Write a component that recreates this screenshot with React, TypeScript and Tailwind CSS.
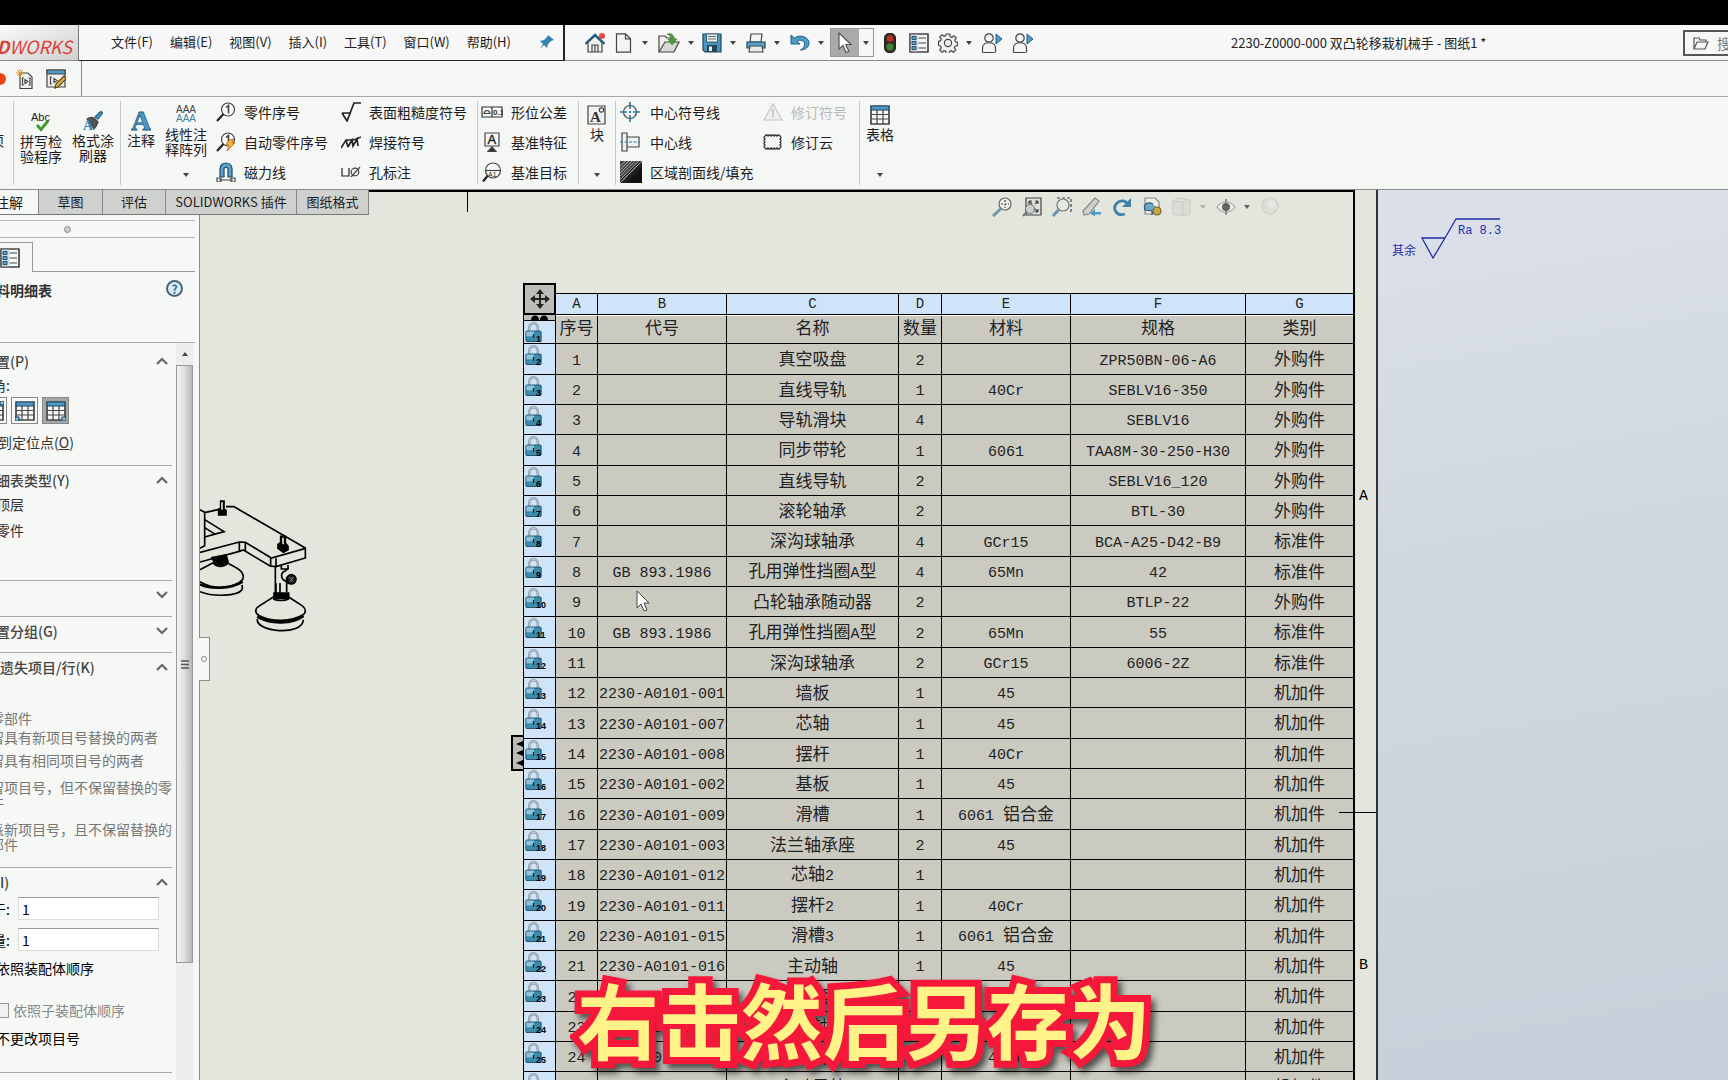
import type { ReactNode } from "react";
import clsx from "clsx";

type IconProps = { children: ReactNode; size?: string; box?: string };

function Icon({ children, size = "size-5", box = "0 0 20 20" }: IconProps) {
  return (
    <svg viewBox={box} className={clsx(size, "shrink-0")} fill="none" stroke="#444" strokeWidth="1.2">
      {children}
    </svg>
  );
}

const Caret = ({ className = "" }: { className?: string }) => (
  <svg viewBox="0 0 6 4" className={clsx("h-1 w-1.5 shrink-0", className)}>
    <path d="M0 0h6L3 4z" fill="#444" />
  </svg>
);

/* ---------- quick access icons ---------- */

const HomeIcon = () => (
  <Icon>
    <path d="M3 9v10h14V9l-7-6z" fill="#f1f1ee" />
    <path d="M7 19v-7h6v7M10 12v7" />
    <path d="M0.5 11 10 2l9.500 9" stroke="#1f5f86" strokeWidth="2.4" />
    <circle cx="17" cy="3" r="3" fill="#e64a3c" stroke="none" />
  </Icon>
);
const NewIcon = () => (
  <Icon>
    <path d="M2.500.8h9l5 5v13.400h-14z" fill="#f4f4f2" />
    <path d="M11.500.8v5h5" />
  </Icon>
);
const OpenIcon = () => (
  <Icon size="h-5 w-[22px]" box="0 0 22 20">
    <path d="M1 19V3h6l2 2h7v4" fill="#efefe9" />
    <path d="M1 19 7 9h14l-5 10z" fill="#d8d9d2" />
    <path d="M9 1c5-1 7 1 7 5h3l-5 6-4-6h3c0-2-1-4-4-5z" fill="#4f9a34" stroke="#3a7a22" strokeWidth=".6" />
  </Icon>
);
const SaveIcon = () => (
  <Icon>
    <path d="M1 1h18v18H3l-2-2z" fill="#4b93b9" stroke="#1d4763" />
    <path d="M4.500 1h11v8h-11z" fill="#eee" stroke="#1d4763" strokeWidth=".8" />
    <path d="M6 3.500h8M6 6h8" strokeWidth=".8" />
    <path d="M5 12h10v7H5z" fill="#2b4558" stroke="none" />
    <path d="M7 13.500h3V18H7z" fill="#e8eef0" stroke="none" />
  </Icon>
);
const PrintIcon = () => (
  <Icon>
    <path d="M5 1h11l-1 8H4z" fill="#f4f4f2" />
    <path d="M1 9h18v6H1z" fill="#5ba3c9" stroke="#1d4763" />
    <path d="M4 13h12l1 6H3z" fill="#e9ecec" />
  </Icon>
);
const UndoIcon = () => (
  <Icon>
    <path d="M1 2v9h9L7 8c4-2 8 0 7.500 4-.2 2-2 4-4 5 5 0 8.500-3 8.500-7C19 4 10 1 4.500 5z" fill="#4f9bc4" stroke="#1f5f86" strokeWidth="1" />
  </Icon>
);
const ArrowIcon = () => (
  <Icon size="h-[22px] w-4" box="0 0 16 22">
    <path d="M2 1v16l4-3.500 3 7 2.800-1.200-3-6.800H14z" fill="#fff" stroke="#555" />
  </Icon>
);
const TrafficIcon = () => (
  <Icon size="h-5 w-3" box="0 0 12 20">
    <rect x=".5" y=".5" width="11" height="19" rx="5" fill="#3c2c28" stroke="#222" />
    <circle cx="6" cy="5.500" r="3.200" fill="#b8322a" stroke="none" />
    <circle cx="6" cy="14" r="3.400" fill="#3c8a36" stroke="none" />
  </Icon>
);
const ListIcon = () => (
  <Icon>
    <path d="M1 1h18v18H1z" fill="#f4f6f6" />
    <path d="M1 1h8v18H1z" fill="#c7dbe6" stroke="none" />
    <path d="M3 3.500h4v3H3zM3 8.500h4v3H3zM3 13.500h4v3H3z" fill="#5ba3c9" stroke="#1d4763" strokeWidth=".9" />
    <path d="M9.500 5H17M9.500 10H17M9.500 15H17M1 1h18v18H1z" />
  </Icon>
);
const GearIcon = () => (
  <Icon>
    <path
      d="M8.300 1h3.400l.5 2.500 1.600.7 2.100-1.500 2.400 2.400-1.500 2.100.7 1.600 2 .5v3.400l-2.500.5-.7 1.600 1.500 2.100-2.400 2.400-2.100-1.500-1.600.7-.5 2.500H8.300l-.5-2.500-1.600-.7-2.100 1.500-2.400-2.400 1.500-2.100-.7-1.600L.5 12.200V8.300l2-.5.7-1.600-1.500-2.100L4.100 1.700l2.100 1.500 1.600-.7z"
      fill="#f1f1ee"
    />
    <circle cx="10" cy="10" r="3.600" />
  </Icon>
);
const PersonIcon = () => (
  <Icon size="h-5 w-[22px]" box="0 0 22 20">
    <circle cx="8" cy="5" r="4.200" fill="#f4f4f2" />
    <path d="M1.500 19v-4c0-7 13-7 13 0v4c0 .8-13 .8-13 0z" fill="#f4f4f2" />
    <path d="M15 1v10l6-5z" fill="#4f9bc4" stroke="#1f5f86" strokeWidth="1" />
  </Icon>
);

/* ---------- ribbon icons ---------- */

const SpellIcon = () => (
  <Icon size="h-[21px] w-5" box="0 0 20 21">
    <text x="0" y="10" fontSize="11" fill="#222" stroke="none" fontFamily="Liberation Sans">Abc</text>
    <path d="M6 14l4 4.500 7-8.500" stroke="#3f9a2c" strokeWidth="2.800" />
  </Icon>
);
const BrushIcon = () => (
  <Icon>
    <path d="M12 6 17 1c2-1 3 1 2 2l-4 5z" fill="#4f9bc4" stroke="#1f5f86" />
    <path d="M4 8c3-2 6-2 8 0l3 3c-1 3-2 5-4 7l-3-5z" fill="#555" />
    <text x="0" y="19" fontSize="14" fontWeight="bold" fill="#2f86b4" stroke="none" fontFamily="Liberation Serif">A</text>
  </Icon>
);
const NoteIcon = () => (
  <Icon>
    <text x="0" y="19" fontSize="28" fontWeight="bold" fill="#4f9bc4" stroke="#1f5f86" strokeWidth=".8" fontFamily="Liberation Serif">A</text>
  </Icon>
);
const PatternIcon = () => (
  <Icon>
    <text x="0" y="8" fontSize="10" fill="#444" stroke="none" fontFamily="Liberation Sans">AAA</text>
    <text x="0" y="17" fontSize="10" fill="#47819e" stroke="none" fontFamily="Liberation Sans">AAA</text>
  </Icon>
);
const BalloonIcon = ({ bolt = false }) => (
  <Icon>
    <circle cx="12" cy="7.500" r="6.500" fill="#fafafa" />
    <path d="M7.500 12 1 19" stroke="#222" strokeWidth="2.200" />
    <path d="M10 5.500 12.500 3.500v8" strokeWidth="1.600" />
    {bolt && <path d="M13 8l5-1-2 4h3l-8 8 2-6h-3z" fill="#f2b63c" stroke="#a8700f" strokeWidth=".8" />}
  </Icon>
);
const MagnetIcon = () => (
  <Icon>
    <path d="M4 15V7c0-8 12-8 12 0v8h-4V7.500c0-3-4-3-4 0V15z" fill="#5ba3c9" stroke="#1d4763" />
    <path d="M3 18h14M1 16h4v4H1zM15 16h4v4h-4z" />
  </Icon>
);
const SurfaceIcon = () => (
  <Icon>
    <path d="M1 11h9M1 11l5 8L13 1h7" stroke="#222" strokeWidth="1.700" />
  </Icon>
);
const WeldIcon = () => (
  <Icon>
    <path d="M0 16 5 8h6c3 0 5-1 9-3" stroke="#222" strokeWidth="1.500" />
    <path d="M5 8l2 7M7 15l4-7 1 6 4-7 1 7" stroke="#222" strokeWidth="1.700" />
  </Icon>
);
const HoleIcon = () => (
  <Icon>
    <path d="M1 6v8h7V6" stroke="#222" />
    <circle cx="14" cy="10" r="3.800" />
    <path d="M10 15l9-10" />
  </Icon>
);
const ToleranceIcon = () => (
  <Icon size="h-5 w-[22px]" box="0 0 22 20">
    <path d="M1 5h20v10H1zM11 5v10" stroke="#333" />
    <path d="M3 11.500h6c-1-4-5-4-6 0z" />
    <text x="12" y="13" fontSize="8" fontWeight="bold" fill="#333" stroke="none" fontFamily="Liberation Sans">0.1</text>
  </Icon>
);
const DatumIcon = () => (
  <Icon>
    <path d="M3 1h14v13H3z" fill="#fafafa" />
    <path d="M10 14v3M6 19.500 10 15l4 4.500z" fill="#333" />
    <text x="5.500" y="12" fontSize="13" fill="#222" stroke="#222" strokeWidth=".4" fontFamily="Liberation Sans">A</text>
  </Icon>
);
const TargetIcon = () => (
  <Icon>
    <circle cx="11" cy="8.500" r="7.500" fill="#fafafa" />
    <path d="M3.500 8.500h15" />
    <path d="M5.500 14 1 19.500" stroke="#222" strokeWidth="2.200" />
    <text x="6" y="15" fontSize="7" fill="#222" stroke="none" fontFamily="Liberation Sans">A1</text>
  </Icon>
);
const BlockIcon = () => (
  <Icon>
    <path d="M1 1h17v18H1z" fill="#f1f1ee" />
    <text x="3" y="17" fontSize="15" fontWeight="bold" fill="#333" stroke="none" fontFamily="Liberation Serif">A</text>
    <circle cx="14.500" cy="5" r="2.200" />
  </Icon>
);
const CenterMarkIcon = () => (
  <Icon>
    <circle cx="10" cy="10" r="6.500" />
    <path d="M10 0v7M10 13v7M0 10h7M13 10h7M10 9v2M9 10h2" stroke="#2f7ba6" strokeWidth="1.700" />
  </Icon>
);
const CenterLineIcon = () => (
  <Icon>
    <path d="M2 1h5v18H2zM7 5h12v10H7z" fill="#eef0ee" />
    <path d="M0 10h20" stroke="#2f7ba6" strokeDasharray="3 1.500" />
  </Icon>
);
const HatchIcon = () => (
  <Icon size="size-[22px]">
    <defs>
      <linearGradient id="hatch" x1="0" y1="0" x2="1" y2="1">
        <stop offset=".3" stopColor="#444" />
        <stop offset=".7" stopColor="#111" />
      </linearGradient>
    </defs>
    <path d="M0 0h20v20H0z" fill="url(#hatch)" stroke="none" />
    <path d="M0 5l5-5M0 8l8-8M0 11 11 0M0 14 14 0M0 17 17 0M0 20 20 0" stroke="#d8d8d8" strokeWidth=".7" />
  </Icon>
);
const RevSymbolIcon = () => (
  <Icon>
    <path d="M10 2 19 18H1z" fill="#f0f0f0" stroke="#c4c6c4" />
    <path d="M8.500 9 10 8v8" stroke="#c4c6c4" strokeWidth="1.600" />
  </Icon>
);
const CloudIcon = () => (
  <Icon>
    <path
      d="M2 4q1.500-2 3 0 1.500-2 3 0 1.500-2 3 0 1.500-2 3 0 1.500-2 3 0 2 1.500 0 3 2 1.500 0 3 2 1.500 0 3 2 1.500 0 3-1.500 2-3 0-1.500 2-3 0-1.500 2-3 0-1.500 2-3 0-1.500 2-3 0-2-1.500 0-3-2-1.500 0-3-2-1.500 0-3-2-1.500 0-3z"
      stroke="#333"
      strokeWidth="1.300"
    />
  </Icon>
);

function TableIcon({ corner }: { corner?: "left" | "right" | "topRight" }) {
  return (
    <Icon>
      <path d="M1 1h18v18H1z" fill="#f6f8f8" />
      <path d="M1 1h18v4H1z" fill="#4f9bc4" stroke="#1d4763" />
      <path d="M1 9.500h18M1 14h18M7 5v14M13 5v14M1 5v14h18V5" />
      {corner === "left" && <path d="M0 16h4v4H0z" fill="#8cc4e0" stroke="#1d4763" />}
      {corner === "right" && <path d="M16 16h4v4h-4z" fill="#8cc4e0" stroke="#1d4763" />}
      {corner === "topRight" && <path d="M16 0h4v4h-4z" fill="#8cc4e0" stroke="#1d4763" />}
    </Icon>
  );
}

/* ---------- top bars ---------- */

const menus = ["文件(F)", "编辑(E)", "视图(V)", "插入(I)", "工具(T)", "窗口(W)", "帮助(H)"];

const quickTools: { name: string; icon: ReactNode; caret?: boolean }[] = [
  { name: "home", icon: <HomeIcon /> },
  { name: "new", icon: <NewIcon />, caret: true },
  { name: "open", icon: <OpenIcon />, caret: true },
  { name: "save", icon: <SaveIcon />, caret: true },
  { name: "print", icon: <PrintIcon />, caret: true },
  { name: "undo", icon: <UndoIcon />, caret: true },
];

function MenuBar() {
  return (
    <header className="flex h-9 shrink-0 items-center border-b border-[#8c8c8c] bg-[#f6f7f6] whitespace-nowrap">
      <div className="flex h-full w-[79px] shrink-0 items-end justify-end border-r border-[#777] bg-linear-to-br from-[#fafafa] to-[#d0d0d0] pr-1.5 text-lg leading-7 text-[#d9433a] italic">
        <b>D</b>WORKS
      </div>
      <div className="flex h-9 w-[486px] shrink-0 items-center border-r-2 border-b border-[#222] pl-8">
        <nav className="flex flex-1 items-center justify-between">
          {menus.map((m) => (
            <button key={m} className="text-[13px]">{m}</button>
          ))}
        </nav>
        <button aria-label="pin" className="mr-2 ml-7">
          <Icon size="size-4" box="0 0 16 16">
            <path d="M9 1l6 5-3 1-3 3-1 4-3-3-4 4 3-5-3-3 4-1 3-3z" fill="#2f86b4" stroke="none" />
          </Icon>
        </button>
      </div>

      <div className="flex items-center pl-5">
        {quickTools.map((t) => (
          <div key={t.name} className={clsx("flex items-center", t.caret ? "w-11" : "w-[29px]")}>
            <button aria-label={t.name}>{t.icon}</button>
            {t.caret && <Caret className="ml-2" />}
          </div>
        ))}
        <div className="-ml-1 flex h-[29px] items-center border border-[#999]">
          <button aria-label="select" className="flex h-full w-7 items-center justify-center bg-[#a9abaa]">
            <ArrowIcon />
          </button>
          <Caret className="mx-1" />
        </div>
        <div className="flex items-center gap-[9px] pl-2.5">
          <button aria-label="rebuild" className="mr-1"><TrafficIcon /></button>
          <button aria-label="properties"><ListIcon /></button>
          <button aria-label="options" className="flex items-center gap-2">
            <GearIcon />
            <Caret />
          </button>
          <button aria-label="user"><PersonIcon /></button>
          <button aria-label="account"><PersonIcon /></button>
        </div>
      </div>

      <div className="flex-1 pl-[197px] text-[13px] text-[#222]">2230-Z0000-000 双凸轮移栽机械手 - 图纸1 *</div>
      <label className="flex h-[26px] w-[45px] shrink-0 items-center gap-2 overflow-hidden border-2 border-r-0 border-[#555] pl-2">
        <Icon size="h-4 w-4" box="0 0 16 16">
          <path d="M1 14V3h5l1 2h6v2M1 14l3-7h11l-3 7z" stroke="#555" />
        </Icon>
        <input aria-label="search" placeholder="搜" className="w-4 bg-transparent text-sm placeholder:text-[#777]" />
      </label>
    </header>
  );
}

function MacroBar() {
  return (
    <div className="flex h-9 shrink-0 border-b border-[#a5a8a5] bg-[#f5f7f5]">
      <div className="flex w-[82px] items-center border-r border-[#8c8c8c]">
        <span className="-ml-1.5 size-3 rounded-full bg-[#ee4411]" />
        <button aria-label="new macro" className="ml-2.5">
          <Icon>
            <path d="M4 4h8l4 4v11.500H4z" fill="#f1f1ee" />
            <path d="M8 9H6.500v7H8M12.500 9H14v7h-1.500M9 10.500v4l3-2z" />
            <path d="M4 0v8M0 4h8M1 1l6 6M7 1 1 7" stroke="#d9952f" strokeWidth="1" />
          </Icon>
        </button>
        <button aria-label="edit macro" className="ml-2.5">
          <Icon>
            <path d="M1 1h18v17H1z" fill="#f1f1ee" />
            <path d="M1 1h18v4H1z" fill="#4f9bc4" />
            <path d="M6 8H4.500v7H6M8 9.500v4l3-2z" />
            <path d="M9 19l1-4 8-8 2 3-8 8z" fill="#e2b74a" stroke="#5c4313" />
          </Icon>
        </button>
      </div>
    </div>
  );
}

function BigButton({ icon, lines, low, caret }: { icon: ReactNode; lines: string[]; low?: boolean; caret?: boolean }) {
  return (
    <button className={clsx("flex h-full flex-col items-center text-sm leading-[15px]", low ? "pt-3.5" : "pt-2")}>
      {icon}
      <span className="pt-0.5">
        {lines.map((l) => (
          <span key={l} className="block">{l}</span>
        ))}
      </span>
      {caret && <Caret className="mt-auto mb-3" />}
    </button>
  );
}

function SmallButton({ icon, label, off }: { icon: ReactNode; label: string; off?: boolean }) {
  return (
    <button disabled={off} className={clsx("flex h-[30px] items-center gap-2 text-sm", off && "text-[#b9bbb9]")}>
      {icon}
      {label}
    </button>
  );
}

const Divider = () => <div className="my-1 w-px shrink-0 bg-[#c9cbc9]" />;

function Ribbon() {
  return (
    <div className="flex h-[93px] shrink-0 overflow-hidden border-b border-[#8c8c8c] bg-[#f5f7f5] whitespace-nowrap text-[#1c1c1c]">
      <div className="w-[13px] shrink-0 pt-9 text-sm leading-[15px]">
        <span className="-ml-2.5">项</span>
      </div>
      <Divider />
      <div className="flex w-[106px] shrink-0 justify-center gap-2.5">
        <BigButton low icon={<SpellIcon />} lines={["拼写检", "验程序"]} />
        <BigButton low icon={<BrushIcon />} lines={["格式涂", "刷器"]} />
      </div>
      <Divider />
      <div className="flex w-[94px] shrink-0 justify-between pr-2 pl-1.5">
        <BigButton low icon={<NoteIcon />} lines={["注释"]} />
        <BigButton caret icon={<PatternIcon />} lines={["线性注", "释阵列"]} />
      </div>
      <div className="w-[124px] shrink-0 pl-px">
        <SmallButton icon={<BalloonIcon />} label="零件序号" />
        <SmallButton icon={<BalloonIcon bolt />} label="自动零件序号" />
        <SmallButton icon={<MagnetIcon />} label="磁力线" />
      </div>
      <div className="w-[138px] shrink-0 pl-0.5">
        <SmallButton icon={<SurfaceIcon />} label="表面粗糙度符号" />
        <SmallButton icon={<WeldIcon />} label="焊接符号" />
        <SmallButton icon={<HoleIcon />} label="孔标注" />
      </div>
      <Divider />
      <div className="w-[100px] shrink-0 pl-[3px]">
        <SmallButton icon={<ToleranceIcon />} label="形位公差" />
        <SmallButton icon={<span className="px-px"><DatumIcon /></span>} label="基准特征" />
        <SmallButton icon={<span className="px-px"><TargetIcon /></span>} label="基准目标" />
      </div>
      <Divider />
      <div className="flex w-9 shrink-0 justify-center">
        <BigButton caret icon={<BlockIcon />} lines={["块"]} />
      </div>
      <Divider />
      <div className="w-[142px] shrink-0 pl-1">
        <SmallButton icon={<span className="pr-0.5"><CenterMarkIcon /></span>} label="中心符号线" />
        <SmallButton icon={<span className="pr-0.5"><CenterLineIcon /></span>} label="中心线" />
        <SmallButton icon={<HatchIcon />} label="区域剖面线/填充" />
      </div>
      <div className="w-[101px] shrink-0 pl-[5px]">
        <SmallButton off icon={<RevSymbolIcon />} label="修订符号" />
        <SmallButton icon={<CloudIcon />} label="修订云" />
      </div>
      <Divider />
      <div className="flex w-10 shrink-0 justify-center">
        <BigButton caret icon={<TableIcon />} lines={["表格"]} />
      </div>
    </div>
  );
}

/* ---------- property panel ---------- */

function Chevron({ up }: { up?: boolean }) {
  return (
    <svg viewBox="0 0 12 8" className="h-2 w-3" fill="none" stroke="#666" strokeWidth="2.200">
      <path d={up ? "M1 7l5-5 5 5" : "M1 1l5 5 5-5"} />
    </svg>
  );
}

function Section({ title, open, className, children }: { title: string; open?: boolean; className: string; children?: ReactNode }) {
  return (
    <section className={clsx("mr-1 border-b border-[#a9aba9]", className)}>
      <button className="flex h-7 w-full items-center justify-between pr-1 text-sm font-medium text-[#444]">
        <span>{title}</span>
        <Chevron up={open} />
      </button>
      {children}
    </section>
  );
}

function NumberField({ id, label, value }: { id: string; label: string; value: string }) {
  return (
    <div className="flex h-[23px] items-center">
      <label htmlFor={id} className="-ml-2 w-[26px] leading-4">{label}</label>
      <input
        id={id}
        defaultValue={value}
        className="h-[23px] w-[141px] border border-[#dcdcdc] border-t-[#999] bg-white px-[3px] text-sm"
      />
    </div>
  );
}

function PropertyPanel() {
  return (
    <aside className="relative flex w-[200px] shrink-0 flex-col border-r border-[#8c8c8c] bg-[#f6f8f6] pt-[30px] text-sm whitespace-nowrap text-[#333]">
      <div className="mr-1 flex h-[18px] shrink-0 items-center border-y border-[#b5b7b5] pl-16">
        <span className="size-[7px] rounded-full border border-[#888] bg-[#ccc]" />
      </div>
      <div className="mr-1 flex h-[34px] shrink-0 items-end">
        <div className="flex h-[30px] w-[33px] items-center border-t border-r border-[#999]">
          <ListIcon />
        </div>
        <div className="flex-1 border-b border-[#999]" />
      </div>
      <div className="mr-1 flex h-[71px] shrink-0 items-start justify-between border-b border-[#a9aba9] pt-2 pr-3">
        <h2 className="-ml-1 text-sm font-bold">料明细表</h2>
        <button aria-label="help" className="flex size-[17px] items-center justify-center rounded-full border-2 border-[#4a6474] bg-[#d8ecf6] text-xs font-bold text-[#2f6f92]">
          ?
        </button>
      </div>

      <div className="flex min-h-0 flex-1 overflow-hidden">
        <div className="min-w-0 flex-1">
          <Section title="置(P)" open className="-ml-1 h-[123px] pt-1">
            <p className="-ml-1 h-[22px]">角:</p>
            <div className="flex gap-1">
              {(["topRight", "left", "right"] as const).map((corner) => (
                <button
                  key={corner}
                  aria-label={corner}
                  className={clsx(
                    "flex size-[27px] items-center justify-center border border-[#888]",
                    corner === "topRight" && "-ml-4",
                    corner === "right" && "bg-[#a6a8a7]"
                  )}
                >
                  <TableIcon corner={corner} />
                </button>
              ))}
            </div>
            <p className="pt-2 pl-0.5">
              到定位点(<u>O</u>)
            </p>
          </Section>
          <Section title="细表类型(Y)" open className="-ml-1 h-[115px]">
            <p className="h-[26px]">顶层</p>
            <p>零件</p>
          </Section>
          <Section title="" className="h-9" />
          <Section title="置分组(G)" className="-ml-1 h-9" />
          <Section title="遗失项目/行(K)" open className="h-[215px] text-[#777]">
            <div className="-ml-2.5 leading-[15px]">
              <p className="pt-[30px]">零部件</p>
              <p className="pt-1">留具有新项目号替换的两者</p>
              <p className="pt-2">留具有相同项目号的两者</p>
              <p className="pt-3">
                留项目号，但不保留替换的零
                <br />
                件
              </p>
              <p className="pt-3">
                派新项目号，且不保留替换的
                <br />
                部件
              </p>
            </div>
          </Section>
          <Section title="I)" open className="h-[205px] text-black">
            <div className="space-y-2 pt-px">
              <NumberField id="start" label="于:" value="1" />
              <NumberField id="step" label="量:" value="1" />
            </div>
            <p className="-ml-1 pt-[7px]">依照装配体顺序</p>
            <label className="flex h-[42px] items-end gap-1 text-[#888]">
              <input type="checkbox" disabled className="mb-0.5 -ml-1.5 size-[15px] appearance-none border border-[#999] bg-[#f1f1f1]" />
              依照子装配体顺序
            </label>
            <p className="-ml-1 pt-2">不更改项目号</p>
          </Section>
        </div>
        <div className="mr-[6px] flex w-[17px] flex-col bg-[#eceeec]">
          <div className="flex h-[22px] shrink-0 items-center justify-center">
            <Caret className="rotate-180" />
          </div>
          <div className="flex h-[598px] shrink-0 items-center justify-center border border-[#999] bg-linear-to-r from-[#f4f5f4] via-[#dcdedd] to-[#b5b8b7]">
            <svg viewBox="0 0 8 9" className="h-[9px] w-2" stroke="#555" strokeWidth="1.400">
              <path d="M0 1h8M0 4.500h8M0 8h8" />
            </svg>
          </div>
        </div>
      </div>

      <button
        aria-label="collapse"
        className="absolute top-[447px] left-[199px] z-10 flex h-11 w-[11px] items-center justify-center border border-l-0 border-[#8c8c8c] bg-[#f6f8f6]"
      >
        <span className="size-1.5 rounded-full border border-[#888]" />
      </button>
    </aside>
  );
}

/* ---------- drawing sheet ---------- */

const rows = [
  ["1", "", "真空吸盘", "2", "", "ZPR50BN-06-A6", "外购件"],
  ["2", "", "直线导轨", "1", "40Cr", "SEBLV16-350", "外购件"],
  ["3", "", "导轨滑块", "4", "", "SEBLV16", "外购件"],
  ["4", "", "同步带轮", "1", "6061", "TAA8M-30-250-H30", "外购件"],
  ["5", "", "直线导轨", "2", "", "SEBLV16_120", "外购件"],
  ["6", "", "滚轮轴承", "2", "", "BTL-30", "外购件"],
  ["7", "", "深沟球轴承", "4", "GCr15", "BCA-A25-D42-B9", "标准件"],
  ["8", "GB 893.1986", "孔用弹性挡圈A型", "4", "65Mn", "42", "标准件"],
  ["9", "", "凸轮轴承随动器", "2", "", "BTLP-22", "外购件"],
  ["10", "GB 893.1986", "孔用弹性挡圈A型", "2", "65Mn", "55", "标准件"],
  ["11", "", "深沟球轴承", "2", "GCr15", "6006-2Z", "标准件"],
  ["12", "2230-A0101-001", "墙板", "1", "45", "", "机加件"],
  ["13", "2230-A0101-007", "芯轴", "1", "45", "", "机加件"],
  ["14", "2230-A0101-008", "摆杆", "1", "40Cr", "", "机加件"],
  ["15", "2230-A0101-002", "基板", "1", "45", "", "机加件"],
  ["16", "2230-A0101-009", "滑槽", "1", "6061 铝合金", "", "机加件"],
  ["17", "2230-A0101-003", "法兰轴承座", "2", "45", "", "机加件"],
  ["18", "2230-A0101-012", "芯轴2", "1", "", "", "机加件"],
  ["19", "2230-A0101-011", "摆杆2", "1", "40Cr", "", "机加件"],
  ["20", "2230-A0101-015", "滑槽3", "1", "6061 铝合金", "", "机加件"],
  ["21", "2230-A0101-016", "主动轴", "1", "45", "", "机加件"],
  ["22", "", "轴套", "1", "", "", "机加件"],
  ["23", "2230-A0101-018", "芯轴", "1", "45", "", "机加件"],
  ["24", "2230-A0101-019", "连接板", "1", "40Cr", "", "机加件"],
  ["25", "", "主动导轨", "", "", "", "机加件"],
];

const headings = ["序号", "代号", "名称", "数量", "材料", "规格", "类别"];
const widths = ["w-[42px]", "w-[129px]", "w-[172px]", "w-[43px]", "w-[129px]", "w-[175px]", "w-[107px]"];

// latin runs are set a bit smaller than the hanzi around them
function CadText({ text }: { text: string }) {
  return text.split(/([\x20-\x7e]+)/).map((part, i) =>
    i % 2 ? (
      <span key={i} className="text-[15px] whitespace-pre">{part}</span>
    ) : (
      part
    )
  );
}

function LockCell({ n }: { n: number }) {
  return (
    <th className="border-x border-b border-black bg-[#cfe4f8] p-0 align-top">
      {n === 1 && (
        <svg viewBox="0 0 31 6" className="block h-1.5 w-full bg-[#bcbcb8]">
          <path d="M7 5c0-6 8-6 8 0zM16 5c0-6 8-6 8 0z" />
          <path d="M0 5.500h31" stroke="#000" />
        </svg>
      )}
      <div className="relative h-[22px] pt-px pl-px">
        <svg viewBox="0 0 17 21" className="block h-[20px] w-[17px]">
          <path d="M4 10V6c0-6 9-6 9 0v4" fill="none" stroke="#7d8a90" strokeWidth="2.400" />
          <path d="M4 10V6c0-6 9-6 9 0v4" fill="none" stroke="#e4eaec" strokeWidth=".8" />
          <rect x=".5" y="9.500" width="16" height="11" rx="1" fill="#3d8cae" stroke="#1e4f68" />
          <path d="M1 10h8v5H1z" fill="#8fc3d8" />
          <path d="M8.500 12.500v4" stroke="#123" strokeWidth="1.400" />
        </svg>
        <span className="absolute top-3 left-3 font-[Liberation_Sans] text-[9px] leading-3 font-bold text-black">{n}</span>
      </div>
    </th>
  );
}

function PartsTable() {
  return (
    <table className="w-[830px] shrink-0 table-fixed border-separate border-spacing-0 bg-[#cbcac1] text-center text-[17px] leading-5 text-[#222]">
      <thead className="font-[Liberation_Mono,Noto_Sans_CJK_SC,monospace]">
        <tr className="h-[22px]">
          <th className="relative w-[33px] bg-[#bcbcb8] p-0">
            <div className="absolute inset-x-0 -top-2.5 bottom-0 flex items-center justify-center border-2 border-black bg-[#bcbcb8]">
              <Icon>
                <path d="M10 2v16M2 10h16" stroke="#222" strokeWidth="2" />
                <path d="M10 0l4 5H6zM10 20l4-5H6zM0 10l5-4v8zM20 10l-5-4v8z" fill="#222" stroke="none" />
              </Icon>
            </div>
          </th>
          {widths.map((w, i) => (
            <th key={i} className={clsx(w, "border-y border-black bg-[#cfe4f8] p-0 text-sm font-normal", i < 6 && "border-r")}>
              {"ABCDEFG"[i]}
            </th>
          ))}
        </tr>
        <tr className="h-[29px]">
          <LockCell n={1} />
          {headings.map((h, i) => (
            <th key={h} className={clsx("border-t border-b border-t-white border-b-black p-0 font-normal", i < 6 && "border-r border-r-black")}>
              {h}
            </th>
          ))}
        </tr>
      </thead>
      <tbody className="font-[Liberation_Mono,Noto_Sans_CJK_SC,monospace]">
        {rows.map((row, r) => (
          <tr key={row[0]} className={r % 3 === 0 ? "h-[31px]" : "h-[30px]"}>
            <LockCell n={r + 2} />
            {row.map((cell, c) => (
              <td key={c} className={clsx("border-b border-black p-0 pt-1 whitespace-nowrap", c < 6 && "border-r")}>
                <CadText text={cell} />
              </td>
            ))}
          </tr>
        ))}
      </tbody>
    </table>
  );
}

function ViewTools() {
  return (
    <div className="flex h-[101px] shrink-0 items-start gap-2.5 pt-[5px] pr-[73px]">
      <button aria-label="zoom to selection">
        <Icon>
          <circle cx="13" cy="7" r="6" fill="#eef1ea" stroke="#666" />
          <path d="M13 3v8M9 7h8" strokeDasharray="2 1.500" />
          <path d="M8.500 12 1 19" stroke="#6d94a8" strokeWidth="3" />
        </Icon>
      </button>
      <button aria-label="zoom to fit">
        <Icon>
          <path d="M4 1h15v17H4z" fill="#dfe1da" />
          <path d="M7 4l3 3M16 4l-3 3M16 15l-3-3M7 4h3M7 4v3M16 4h-3M16 4v3M16 15v-3M16 15h-3" />
          <circle cx="8" cy="12" r="4.500" fill="#c8d2d4" stroke="#777" />
          <path d="M5 15l-4 4" stroke="#777" strokeWidth="2.400" />
        </Icon>
      </button>
      <button aria-label="zoom to area">
        <Icon>
          <path d="M5 1h14v14" strokeDasharray="3 2" />
          <circle cx="11" cy="8" r="6" fill="#e4e9e4" stroke="#777" />
          <path d="M6.500 13 1 19" stroke="#6d94a8" strokeWidth="3" />
        </Icon>
      </button>
      <button aria-label="previous view">
        <Icon>
          <path d="M1 14 13 1l4 3L7 17l-5 1z" fill="#d0d0c8" stroke="#888" />
          <path d="M19 15h-6v-3l-5 4.500 5 3v-2h6z" fill="#4f9bc4" stroke="none" />
        </Icon>
      </button>
      <button aria-label="rotate">
        <Icon>
          <path d="M13 17C4 20 0 11 5 6c3-3 8-3 11 1" stroke="#3f82a5" strokeWidth="2.800" />
          <path d="M19 1v9h-9z" fill="#3f82a5" stroke="none" />
        </Icon>
      </button>
      <button aria-label="3D view">
        <Icon>
          <path d="M3 1h10l4 4v12H3z" fill="#eceee8" stroke="#888" />
          <path d="M11 7C5 4 1 8 3 13l7 1v3l6-5" fill="#6fa9c6" stroke="#285d7c" />
          <circle cx="15" cy="14" r="4" fill="#c9a550" stroke="#80631f" />
        </Icon>
      </button>
      <button aria-label="section" className="flex h-5 items-center gap-2 opacity-30">
        <Icon>
          <path d="M1 4l6-3 11 2v14l-7 2-10-2zM11 5v14M1 4l10 1 7-2" fill="#c8cac2" stroke="#999" />
        </Icon>
        <Caret />
      </button>
      <button aria-label="visibility" className="flex h-5 items-center gap-2 opacity-80">
        <Icon>
          <path d="M1 10c5-7 13-7 18 0-5 7-13 7-18 0z" fill="#eee" stroke="#999" />
          <circle cx="10" cy="10" r="4" fill="#444" stroke="none" />
          <path d="M10 2v16" />
        </Icon>
        <Caret />
      </button>
      <button aria-label="appearance" className="opacity-40">
        <Icon>
          <circle cx="10" cy="9" r="8" fill="#d4d5cf" stroke="#aaa" />
          <circle cx="12" cy="7" r="4" fill="#ecece8" stroke="none" />
        </Icon>
      </button>
    </div>
  );
}

function RobotDrawing() {
  return (
    <svg
      viewBox="30 50 330 411"
      className="absolute top-[305px] left-0 h-[137px] w-[110px]"
      fill="none"
      stroke="#000"
      strokeWidth="5"
    >
      <path d="M30 88l14 8v100l-14 8M44 97l40-9M108 79h24l214 124v30l-88 26-18-2-80-48-12 4-118 32" />
      <path d="M30 216l118-31 18 1 78 47 100-28M148 186v26M166 188v24M242 234v24M258 234v24" />
      <path d="M44 118l58 36-58 16M44 142l32 20" />
      <path d="M86 104V86l6-2V62h10v24l6 4v14z" fill="#000" />
      <path d="M96 66v22" stroke="#e2e6dc" />
      <path d="M264 204v-12l8-6v-18h14v20l8 10v10l-14 8z" fill="#000" />
      <path d="M279 172v20" stroke="#e2e6dc" />
      <path d="M66 232l42-8 6 20-16 10H76z" fill="#000" />
      <path d="M68 246c14 16 36 16 48 0M68 248l-38 20M116 250c24 12 44 22 44 40 0 14-20 22-38 28-30 6-66 2-92-14" />
      <path d="M30 312c30 14 90 16 128-8" strokeWidth="8" />
      <path d="M30 334c40 16 112 14 126-6 2-6 1-10 0-14" />
      <path d="M256 260v78M258 308v30M270 308v30M290 290v46" />
      <path d="M274 256v10h20v-12M296 262l-10 10c-16 4-14 24 0 30l12 8" />
      <circle cx="304" cy="297" r="14" fill="#222" />
      <path d="M298 290l12 14M310 290l-10 14" stroke="#aaa" strokeWidth="2" />
      <path d="M252 338h44v16h-44z" fill="#000" />
      <path d="M250 356c12 6 34 6 46 0M250 350l-44 28c-12 8-12 20 2 28 40 20 96 18 130-2 12-8 10-20-2-28l-40-26" />
      <path d="M202 408c40 24 106 22 138-2" strokeWidth="10" />
      <path d="M202 416c-6 40 136 52 138 2" />
    </svg>
  );
}

function Sheet() {
  return (
    <div className="flex min-w-0 flex-1 bg-[#e2e6dc]">
      <div className="relative flex min-w-0 flex-1 flex-col items-end border-t-2 border-r-2 border-black">
        <ViewTools />
        <PartsTable />
        <RobotDrawing />
        <div className="absolute top-0 left-[267px] h-5 w-px bg-black" />
        <div className="absolute top-[543px] right-[830px] flex h-9 w-3 flex-col items-end justify-evenly border-2 border-r-0 border-black bg-[#bcbcb8]">
          {[0, 1, 2].map((i) => (
            <svg key={i} viewBox="0 0 7 6" className="h-1.5 w-[7px]">
              <path d="M7 0v6L0 3z" />
            </svg>
          ))}
        </div>
        <svg viewBox="0 0 14 22" className="absolute top-[398px] left-[436px] h-[22px] w-3.5" fill="#fff" stroke="#444">
          <path d="M1 1v17l4-4 3 7 3-1-3-7h5z" />
        </svg>
      </div>
      <div className="relative flex w-[23px] flex-col border-r-2 border-[#333] font-[Liberation_Mono] text-[15px] text-black">
        <div className="h-[623px] shrink-0 border-b border-black pt-[296px] pl-1">A</div>
        <div className="pt-[142px] pl-1">B</div>
        <div className="absolute top-[622px] -left-4 h-px w-4 bg-black" />
      </div>
    </div>
  );
}

function Backdrop() {
  return (
    <div className="w-[350px] shrink-0 bg-linear-170 from-[#dce0ea] via-[#d0d8df] via-40% to-[#c7d0da] pt-[26px] pl-[14px]">
      <svg viewBox="0 0 112 48" className="h-12 w-28" fill="none" stroke="#1f2fa8" strokeWidth="1.300">
        <path d="M30 22h23L41 42zM53 22 64 3h44" />
        <text x="0" y="39" fontSize="12" fill="#1f2fa8" stroke="none" fontFamily="Noto Sans CJK SC, sans-serif">其余</text>
        <text x="66" y="18" fontSize="12" fill="#1f2fa8" stroke="none" fontFamily="Liberation Mono, monospace">Ra 8.3</text>
      </svg>
    </div>
  );
}

const tabs = [
  { label: "注解", width: "w-[39px]", active: true },
  { label: "草图", width: "w-16" },
  { label: "评估", width: "w-[63px]" },
  { label: "SOLIDWORKS 插件", width: "w-[131px]" },
  { label: "图纸格式", width: "w-[72px]" },
];

function App() {
  return (
    <div className="flex h-screen flex-col overflow-hidden bg-[#f5f7f5] font-[Noto_Sans_CJK_SC,sans-serif] text-[#1c1c1c]">
      <div className="h-[25px] shrink-0 bg-black" />
      <MenuBar />
      <MacroBar />
      <Ribbon />

      <main className="relative flex min-h-0 flex-1 overflow-hidden">
        <PropertyPanel />
        <Sheet />
        <Backdrop />
        <div className="absolute top-0 left-0 flex h-[25px] border-b border-[#777] text-sm whitespace-nowrap">
          {tabs.map((t) => (
            <button
              key={t.label}
              className={clsx(
                "flex items-center justify-center border-r border-[#888]",
                t.width,
                t.active ? "bg-[#f5f7f5] pr-5" : "bg-[#cfd1cf] text-[13px]"
              )}
            >
              {t.label}
            </button>
          ))}
        </div>
      </main>

      <p className="pointer-events-none absolute inset-x-0 bottom-0 text-center text-[82px] leading-[124px] font-bold text-[#fff388] drop-shadow-[4px_5px_3px_rgba(0,0,0,0.6)] [-webkit-text-stroke:14px_#f5183a] [paint-order:stroke_fill]">
        右击然后另存为
      </p>
    </div>
  );
}

export default App;
